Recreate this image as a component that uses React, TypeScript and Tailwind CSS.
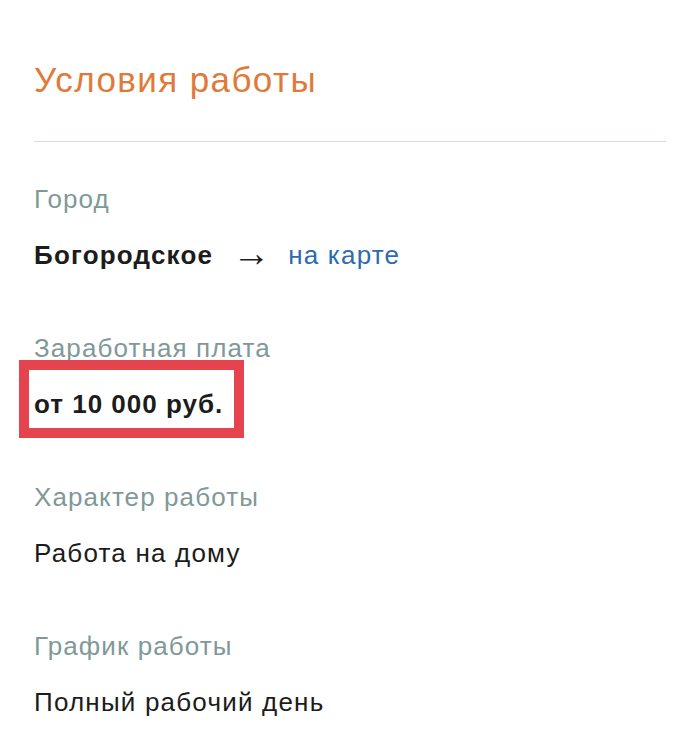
import React from 'react';

type Row = {
  label: string;
  value: React.ReactNode;
};

const rows: Row[] = [
  {
    label: 'Город',
    value: (
      <span className="flex items-center">
        <span className="font-bold text-[#1c1c1c]">Богородское</span>
        <span className="ml-[19px] mr-[18px] -mt-[5px] text-[38px] leading-[30px] tracking-normal text-[#1c1c1c]">→</span>
        <a href="#" className="text-[#2f6aae]">на карте</a>
      </span>
    ),
  },
  {
    label: 'Заработная плата',
    value: (
      <span className="relative inline-block font-bold tracking-[1px] text-[#1c1c1c]">
        от 10 000 руб.
        <span className="absolute -left-[15px] -right-[21px] -top-[29px] -bottom-[19px] border-[10px] border-[#e5434d]" />
      </span>
    ),
  },
  { label: 'Характер работы', value: <span className="text-[#1c1c1c]">Работа на дому</span> },
  { label: 'График работы', value: <span className="text-[#1c1c1c]">Полный рабочий день</span> },
];

const App = () => {
  return (
    <div className="min-h-screen bg-white font-['Liberation_Sans',Arial,sans-serif]">
      <div className="pl-[34px] pr-[34px] pt-[58px]">
        {/* Title */}
        <h1 className="text-[35px] leading-[44px] tracking-[1.4px] text-[#e07a3a]">Условия работы</h1>
        <div className="mt-[39px] h-px bg-[#d3dedd]" />

        {/* Conditions */}
        <div className="mt-[42px] flex flex-col gap-[63px]">
          {rows.map((row) => (
            <div key={row.label}>
              <div className="text-[26px] leading-[30px] tracking-[1.1px] text-[#7f9999]">{row.label}</div>
              <div className="mt-[26px] text-[26px] leading-[30px] tracking-[1.2px]">{row.value}</div>
            </div>
          ))}
        </div>
      </div>
    </div>
  );
};

export default App;
